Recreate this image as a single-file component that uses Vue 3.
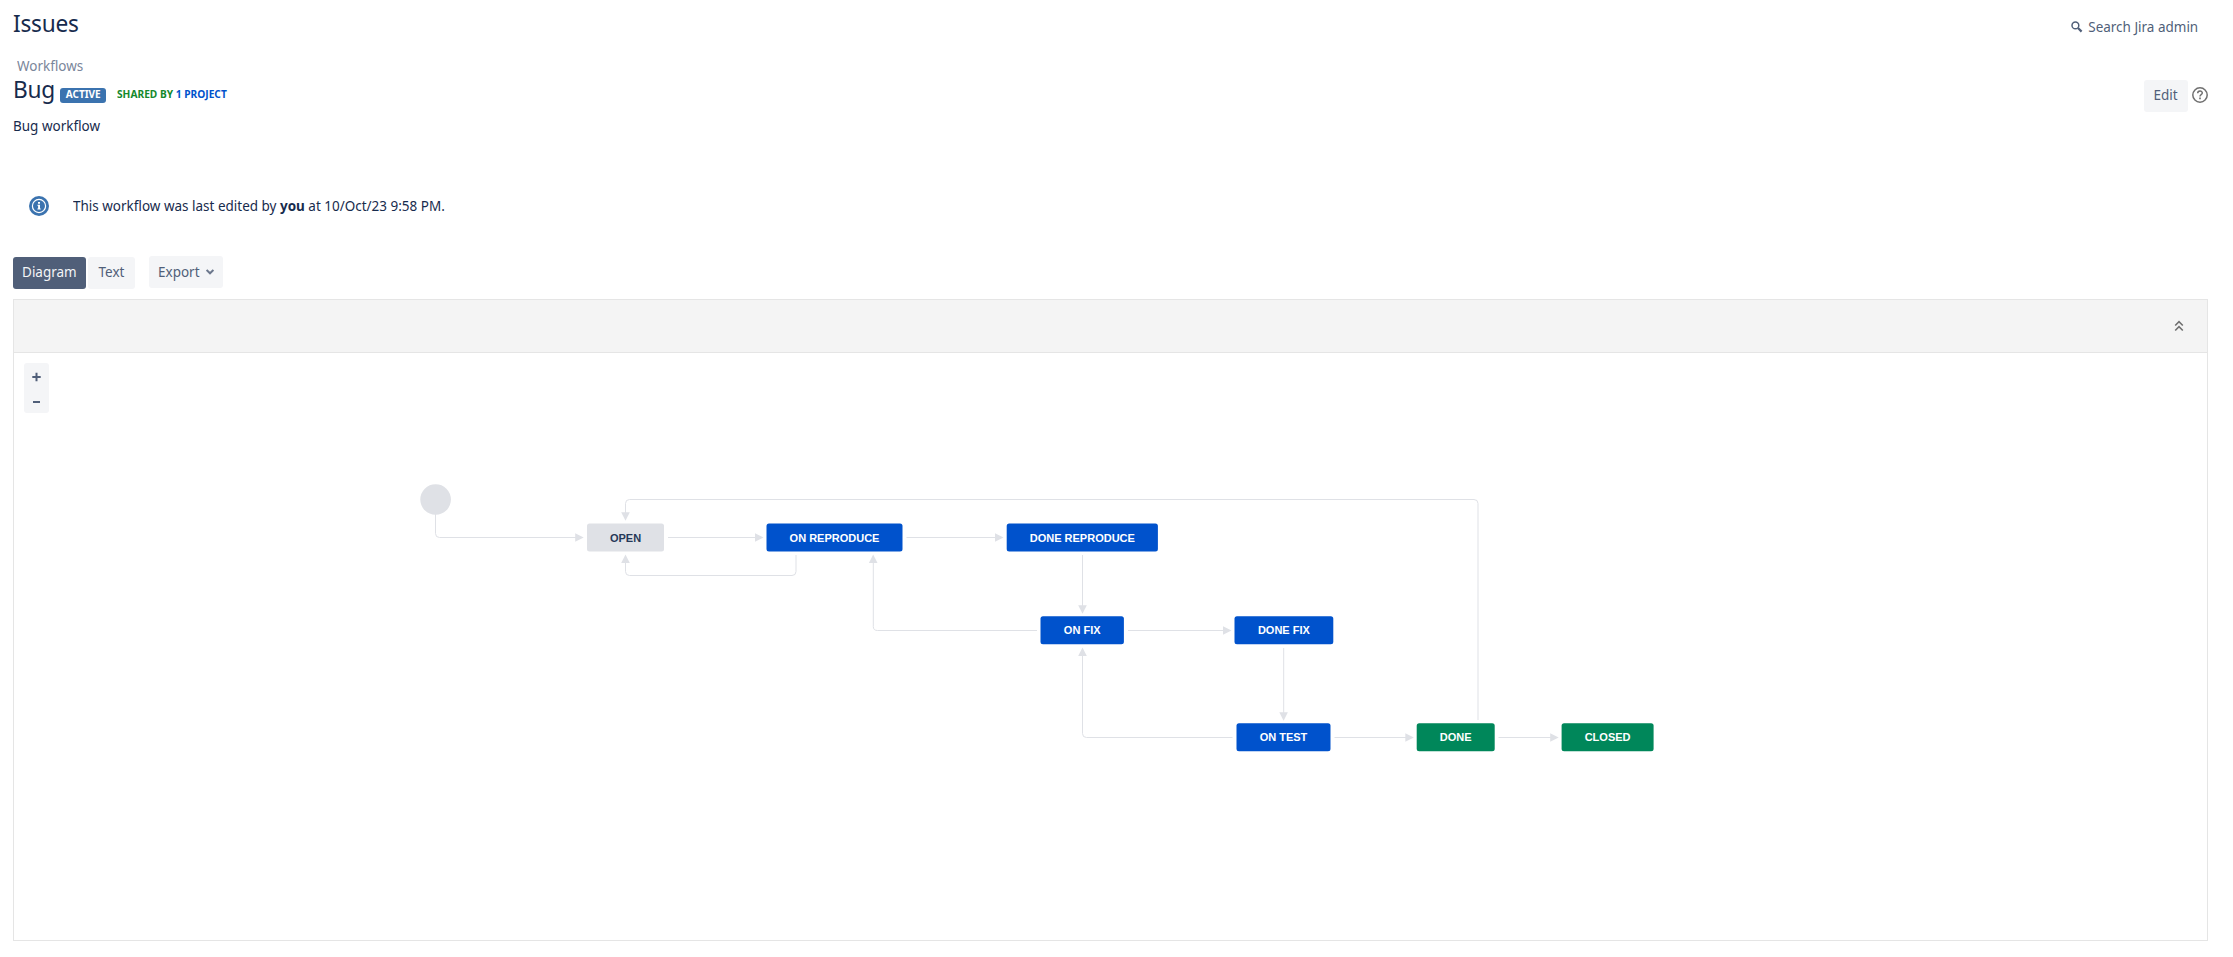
<script setup>
const nodes = [
  { label: 'OPEN', x: 587, y: 523.4, w: 77, kind: 'todo' },
  { label: 'ON REPRODUCE', x: 766.5, y: 523.4, w: 136, kind: 'progress' },
  { label: 'DONE REPRODUCE', x: 1006.7, y: 523.4, w: 151.2, kind: 'progress' },
  { label: 'ON FIX', x: 1040.5, y: 616.3, w: 83.4, kind: 'progress' },
  { label: 'DONE FIX', x: 1234.5, y: 616.3, w: 98.8, kind: 'progress' },
  { label: 'ON TEST', x: 1236.5, y: 723.3, w: 94, kind: 'progress' },
  { label: 'DONE', x: 1416.7, y: 723.3, w: 78, kind: 'done' },
  { label: 'CLOSED', x: 1561.6, y: 723.3, w: 92, kind: 'done' },
]

const edges = [
  'M435.5 514V533.5Q435.5 537.5 439.5 537.5H576',
  'M668 537.5H756',
  'M906.5 537.5H996',
  'M796 555V571.5Q796 575.5 792 575.5H629.5Q625.5 575.5 625.5 571.5V562',
  'M1478 720V503.5Q1478 499.5 1474 499.5H629.5Q625.5 499.5 625.5 503.5V513',
  'M1082.5 555V606',
  'M1037 630.5H877.5Q873.3 630.5 873.3 626.5V562',
  'M1128 630.5H1224',
  'M1283.7 648V713',
  'M1232.5 737.5H1086.5Q1082.5 737.5 1082.5 733.5V655',
  'M1334.5 737.5H1406',
  'M1498.5 737.5H1551',
]

const heads = [
  { x: 583.7, y: 537.5, r: 0 },
  { x: 763.5, y: 537.5, r: 0 },
  { x: 1003.5, y: 537.5, r: 0 },
  { x: 1231.5, y: 630.5, r: 0 },
  { x: 1413.8, y: 737.5, r: 0 },
  { x: 1558.7, y: 737.5, r: 0 },
  { x: 625.5, y: 520.8, r: 90 },
  { x: 1082.5, y: 613.8, r: 90 },
  { x: 1283.6, y: 720.7, r: 90 },
  { x: 625.5, y: 554.5, r: -90 },
  { x: 873.2, y: 554.5, r: -90 },
  { x: 1082.5, y: 647.5, r: -90 },
]
</script>

<template>
  <main class="page">
    <header class="top">
      <h1>Issues</h1>
      <a class="search">
        <svg width="12" height="12" viewBox="0 0 12 12"><circle cx="4.4" cy="4.4" r="3.4" fill="none" stroke="#505f79" stroke-width="1.5" /><path d="M7 7L10.600 10.600" stroke="#505f79" stroke-width="2.200" /></svg>
        <span class="narrow from-right">Search Jira admin</span>
      </a>
    </header>

    <section class="heading">
      <div>
        <div class="crumb"><span class="narrow">Workflows</span></div>
        <div class="title-row">
          <h2>Bug</h2>
          <span class="badge"><span class="label">ACTIVE</span></span>
          <span class="shared">SHARED BY <a>1 PROJECT</a></span>
        </div>
      </div>
      <div class="actions">
        <button class="btn edit"><span class="narrow centered">Edit</span></button>
        <svg width="16" height="16" viewBox="0 0 16 16" fill="none" stroke="#707070" stroke-width="1.5"><circle cx="8" cy="8" r="7.200" /><path d="M5.700 6.300C5.700 3.200 10.300 3.200 10.300 6.100C10.300 7.600 8 7.800 8 9.400" /><path d="M8 10.600V12.200" stroke-width="1.700" /></svg>
      </div>
    </section>
    <p class="desc narrow">Bug workflow</p>

    <div class="message">
      <svg width="20" height="20" viewBox="0 0 20 20"><circle cx="10" cy="10" r="10" fill="#3b73af" /><circle cx="10" cy="10" r="6.600" fill="none" stroke="#fff" stroke-width="1.200" /><path d="M9 6H11V7.700H9ZM8.400 8.700H11V12.500H11.700V13.600H8.400V12.500H9.100V9.800H8.400Z" fill="#fff" /></svg>
      <p class="narrow">This workflow was last edited by <b>you</b> at 10/Oct/23 9:58 PM.</p>
    </div>

    <nav class="tabs">
      <button class="btn selected"><span class="narrow centered">Diagram</span></button>
      <button class="btn text"><span class="narrow centered">Text</span></button>
      <button class="btn export"><span class="narrow">Export</span>
        <svg width="8" height="6" viewBox="0 0 8 6"><path d="M.6 1L4 4.300L7.400 1" fill="none" stroke="#6b778c" stroke-width="2" /></svg>
      </button>
    </nav>

    <section class="designer">
      <div class="toolbar">
        <svg width="10" height="12" viewBox="0 0 10 12" fill="none" stroke="#707070" stroke-width="1.600"><path d="M1.200 5.500L5 1.700L8.800 5.500M1.200 10.500L5 6.700L8.800 10.500" /></svg>
      </div>
      <div class="canvas">
        <svg width="2193" height="587" viewBox="14 353 2193 587">
          <circle cx="435.6" cy="499.5" r="15.3" fill="#dfe1e6" />
          <path v-for="d in edges" :key="d" :d="d" class="edge" />
          <path v-for="(h, i) in heads" :key="i" d="M0 0L-8.500 -4.300V4.300Z" fill="#dfe1e6" :transform="`translate(${h.x} ${h.y}) rotate(${h.r})`" />
          <g v-for="n in nodes" :key="n.label" :class="n.kind">
            <rect :x="n.x" :y="n.y" :width="n.w" height="28" rx="2.500" />
            <text :x="n.x + n.w / 2" :y="n.y + 18.1">{{ n.label }}</text>
          </g>
        </svg>
        <div class="zoom">
          <svg width="25" height="50" viewBox="0 0 25 50" stroke="#505f79" stroke-width="2"><path d="M8.300 14H16.700M12.500 9.700V18.300" /><path d="M9 39H16" /></svg>
        </div>
      </div>
    </section>
  </main>
</template>

<style>
body {
  margin: 0;
  background: #fff;
}
</style>

<style scoped>
.page {
  box-sizing: border-box;
  width: 2233px;
  height: 957px;
  padding: 9px 25px 0 13px;
  overflow: hidden;
  font: 14px/20px "Noto Sans", sans-serif;
  color: #172b4d;
}
h1, h2, p {
  margin: 0;
}
h1, h2 {
  font-size: 24px;
  line-height: 28px;
  font-weight: 400;
  letter-spacing: -0.24px;
  transform: scaleX(0.945);
  transform-origin: left;
}
.narrow {
  display: inline-block;
  transform: scaleX(0.963);
  transform-origin: left;
}
.from-right {
  transform-origin: right;
}
.centered {
  transform-origin: center;
}
.desc {
  display: block;
}
.top {
  display: flex;
  justify-content: space-between;
  height: 47px;
}
.search {
  display: flex;
  gap: 1px;
  padding: 8px 10px 0 0;
  color: #505f79;
}
.search svg {
  margin-top: 4px;
}
.heading {
  display: flex;
  justify-content: space-between;
  height: 60px;
}
.crumb {
  padding-left: 4px;
  height: 19px;
  color: #7a869a;
}
.title-row {
  display: flex;
  align-items: flex-start;
  height: 28px;
}
h2 {
  width: 41px;
}
.badge {
  box-sizing: border-box;
  display: flex;
  justify-content: center;
  margin: 13px 11px 0 6px;
  width: 46px;
  height: 15px;
  border-radius: 3px;
  background: #3b73af;
  color: #fff;
  font-size: 11px;
  line-height: 12px;
  font-weight: 700;
}
.label {
  transform: scaleX(0.91);
}
.shared {
  margin-top: 13px;
  color: #14892c;
  font-size: 11px;
  line-height: 12px;
  font-weight: 700;
  transform: scaleX(0.926);
  transform-origin: left;
}
.shared a {
  color: #0052cc;
}
.actions {
  display: flex;
  align-items: center;
  gap: 4px;
  height: 32px;
  margin: 24px 0 0;
}
.actions svg {
  margin-top: -2px;
}
.btn {
  box-sizing: border-box;
  height: 32px;
  padding: 0 0 2px;
  border: 0;
  border-radius: 3px;
  background: #f4f5f7;
  color: #505f79;
  font: inherit;
}
.edit {
  width: 44px;
}
.message {
  display: flex;
  gap: 24px;
  margin: 60px 0 0 16px;
}
.tabs {
  display: flex;
  height: 43px;
  margin-top: 40px;
}
.selected {
  width: 73px;
  margin-top: 1px;
  background: #505f79;
  color: #f4f5f7;
}
.text {
  width: 47px;
  margin: 1px 14px 0 2px;
}
.export {
  display: flex;
  align-items: center;
  justify-content: center;
  gap: 4px;
  width: 74px;
  padding: 0;
}
.designer {
  box-sizing: border-box;
  height: 642px;
  border: 1px solid #e5e5e5;
}
.toolbar {
  box-sizing: border-box;
  display: flex;
  justify-content: flex-end;
  align-items: center;
  height: 53px;
  padding-right: 23px;
  border-bottom: 1px solid #e5e5e5;
  background: #f4f4f4;
}
.canvas {
  position: relative;
  height: 587px;
}
.canvas > svg {
  display: block;
}
.edge {
  fill: none;
  stroke: #dfe1e6;
  stroke-width: 1;
}
.canvas text {
  font: 700 11px "Liberation Sans", Arial, sans-serif;
  text-anchor: middle;
}
.todo rect { fill: #dfe1e6; }
.todo text { fill: #253858; }
.progress rect { fill: #0052cc; }
.progress text { fill: #fff; }
.done rect { fill: #00875a; }
.done text { fill: #fff; }
.zoom {
  position: absolute;
  left: 10px;
  top: 10px;
  width: 25px;
  height: 50px;
  border-radius: 3px;
  background: #f4f5f7;
}
</style>
